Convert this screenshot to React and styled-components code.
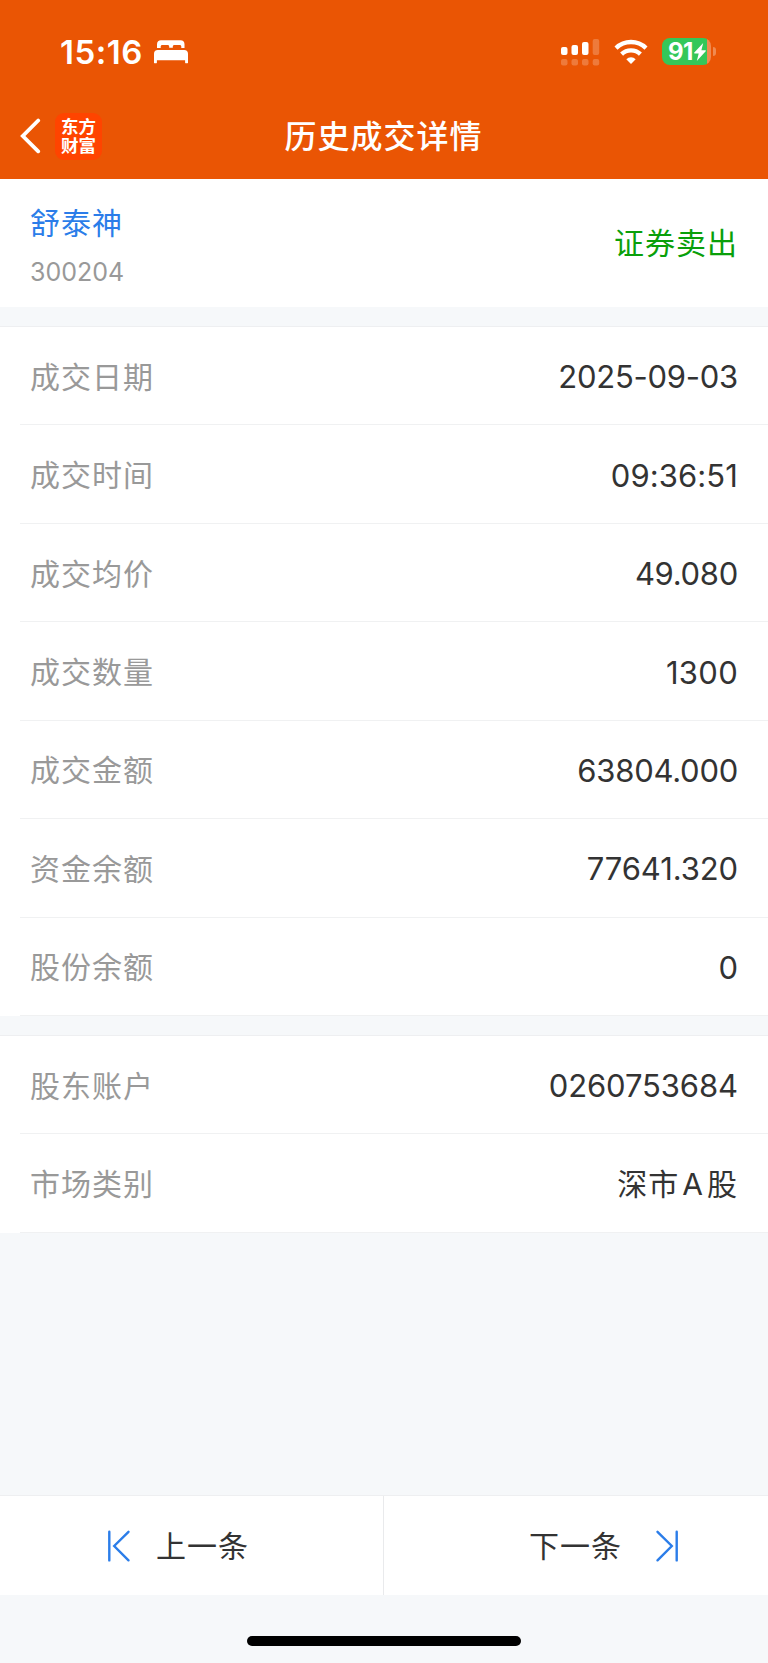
import React from 'react';
import styled, { createGlobalStyle } from 'styled-components';

const tradeRows = [
  { label: '成交日期', value: '2025-09-03', spacing: '-0.25px' },
  { label: '成交时间', value: '09:36:51', spacing: '0.1px' },
  { label: '成交均价', value: '49.080', spacing: '-0.3px' },
  { label: '成交数量', value: '1300', spacing: '0.3px' },
  { label: '成交金额', value: '63804.000', spacing: '-0.25px' },
  { label: '资金余额', value: '77641.320', spacing: '-0.1px' },
  { label: '股份余额', value: '0' },
];

const SignalIcon = () => (
  <svg width="39" height="28" viewBox="0 0 39 28" fill="#fff">
    <rect x="0" y="9" width="6.5" height="8" rx="2" />
    <rect x="10.5" y="7" width="6.5" height="10" rx="2" />
    <rect x="21" y="4" width="6.5" height="13" rx="2" />
    <g opacity="0.22">
      <rect x="31.7" y="1" width="6.5" height="16" rx="2" />
      <rect x="0" y="21" width="6.5" height="6.5" rx="2" />
      <rect x="10.5" y="21" width="6.5" height="6.5" rx="2" />
      <rect x="21" y="21" width="6.5" height="6.5" rx="2" />
      <rect x="31.7" y="21" width="6.5" height="6.5" rx="2" />
    </g>
  </svg>
);

const WifiIcon = () => (
  <svg width="34" height="26" viewBox="0 0 34 26" fill="none" stroke="#fff" strokeWidth="4.3">
    <path d="M2 9.1a21.5 21.5 0 0 1 30 0" />
    <path d="M7.6 15.1a13.5 13.5 0 0 1 18.8 0" />
    <path d="M12.3 20.2a6.8 6.8 0 0 1 9.4 0L17 25z" fill="#fff" stroke="none" />
  </svg>
);

const BedIcon = () => (
  <svg width="34" height="24" viewBox="0 0 34 24" fill="#fff">
    <path d="M3 8V4.2C3 1.7 4.6.2 7 .2h19.5c2.5 0 4 1.5 4 4V8h-3.2V6.8c0-1.2-.6-1.8-1.7-1.8h-5.1c-1.1 0-1.7.6-1.7 1.8v.9h-3.6v-.9c0-1.2-.6-1.8-1.7-1.8H8.4c-1.1 0-1.7.6-1.7 1.8V8z" />
    <path d="M0 13.8c0-2.4 1.3-3.8 3.8-3.8h26.4c2.5 0 3.8 1.4 3.8 3.8v8.6c0 1.2-2.9 1.2-2.9 0v-2.2H2.9v2.2c0 1.2-2.9 1.2-2.9 0z" />
  </svg>
);

const BoltIcon = () => (
  <svg width="12" height="18" viewBox="0 0 12 18" fill="#fff">
    <path d="M9.2 0 .3 9.6c-.4.5-.2 1 .4 1h4L2.8 18l8.9-9.7c.4-.5.2-1-.4-1H7.4z" />
  </svg>
);

const BackIcon = () => (
  <svg width="21" height="36" viewBox="0 0 21 36" fill="none" stroke="#fff" strokeWidth="3.8" strokeLinecap="round" strokeLinejoin="miter">
    <path d="M18.2 2.5 2.8 18l15.4 15.3" />
  </svg>
);

const StepIcon = ({ flip }) => (
  <svg width="24" height="32" viewBox="0 0 24 32" fill="none" stroke="#2b7de9" strokeWidth="2.4" strokeLinecap="round">
    <g transform={flip ? 'matrix(-1 0 0 1 24 0)' : undefined}>
      <path d="M2.3 1.8v28.6M21.5 1.8 7.2 16l14.3 14.3" />
    </g>
  </svg>
);

const DetailRow = ({ label, value, spacing, cjk }) => (
  <Row>
    <Label>{label}</Label>
    <Value $spacing={spacing} $cjk={cjk}>{value}</Value>
  </Row>
);

const App = () => {
  return (
    <Screen>
      <GlobalStyle />
      <Header>
        <StatusBar>
          <Clock>15:16</Clock>
          <BedIcon />
          <StatusIcons>
            <SignalIcon />
            <WifiIcon />
            <BatteryWrap>
              <Battery>
                91
                <BoltIcon />
              </Battery>
              <BatteryCap />
            </BatteryWrap>
          </StatusIcons>
        </StatusBar>
        <TitleBar>
          <HeaderLeft>
            <BackIcon />
            <Logo>
              <span>东方</span>
              <span>财富</span>
            </Logo>
          </HeaderLeft>
          <Title>历史成交详情</Title>
        </TitleBar>
      </Header>

      <StockCard>
        <div>
          <StockName>舒泰神</StockName>
          <StockCode>300204</StockCode>
        </div>
        <Direction>证券卖出</Direction>
      </StockCard>

      <Section>
        {tradeRows.map((row) => (
          <DetailRow key={row.label} {...row} />
        ))}
      </Section>

      <Section>
        <DetailRow label="股东账户" value="0260753684" spacing="-0.1px" />
        <DetailRow label="市场类别" value={<>深市<Letter>A</Letter>股</>} spacing="1px" cjk />
      </Section>

      <Pager>
        <PagerButton $gap="25px" $padding="0 27px 0 0">
          <StepIcon />
          <PagerText>上一条</PagerText>
        </PagerButton>
        <PagerButton $gap="33px" $padding="0 0 0 56px">
          <PagerText>下一条</PagerText>
          <StepIcon flip />
        </PagerButton>
      </Pager>
      <HomeArea>
        <HomeIndicator />
      </HomeArea>
    </Screen>
  );
};

const GlobalStyle = createGlobalStyle`
  * {
    box-sizing: border-box;
  }

  body {
    margin: 0;
    background: #f6f8fa;
  }

  svg {
    display: block;
    flex-shrink: 0;
  }
`;

const Screen = styled.div`
  display: flex;
  flex-direction: column;
  width: 768px;
  height: 1663px;
  background: #f6f8fa;
  font-family: Inter, 'Noto Sans CJK SC', sans-serif;
  color: #333;
`;

const Header = styled.header`
  height: 179.3px;
  flex-shrink: 0;
  background: #ea5504;
  color: #fff;
`;

const StatusBar = styled.div`
  display: flex;
  align-items: center;
  height: 96px;
  padding: 7px 52px 0 60px;
`;

const Clock = styled.div`
  width: 94px;
  font-size: 33px;
  font-weight: 600;
  letter-spacing: 0.5px;
  line-height: 40px;
`;

const StatusIcons = styled.div`
  display: flex;
  align-items: center;
  gap: 14px;
  margin-left: auto;
`;

const BatteryWrap = styled.div`
  display: flex;
  align-items: center;
  gap: 2px;
`;

const Battery = styled.div`
  display: flex;
  align-items: center;
  justify-content: center;
  gap: 1px;
  width: 49px;
  height: 27px;
  padding-right: 4px;
  padding-left: 5px;
  border-radius: 8px;
  background: linear-gradient(to right, #34c759 45px, #f08a50 45px);
  font-size: 24px;
  font-weight: 700;
  letter-spacing: -0.5px;
`;

const BatteryCap = styled.div`
  width: 3px;
  height: 9px;
  border-radius: 0 4px 4px 0;
  background: #f08a50;
`;

const TitleBar = styled.div`
  display: grid;
  grid-template-columns: 1fr auto 1fr;
  align-items: center;
  height: 80px;
`;

const HeaderLeft = styled.div`
  display: flex;
  align-items: center;
  gap: 14px;
  padding-left: 20px;
`;

const Logo = styled.div`
  display: flex;
  flex-direction: column;
  align-items: center;
  justify-content: center;
  width: 47px;
  height: 47px;
  border-radius: 9px;
  background: #ff4400;
  font-size: 17.5px;
  font-weight: 700;
  line-height: 19.5px;
`;

const Title = styled.h1`
  margin: 0;
  padding: 2px 1px 0 0;
  font-size: 32px;
  font-weight: 500;
  letter-spacing: 1px;
  line-height: 40px;
`;

const StockCard = styled.section`
  display: flex;
  align-items: center;
  justify-content: space-between;
  height: 127.7px;
  flex-shrink: 0;
  padding: 0 30px;
  background: #fff;
`;

const StockName = styled.div`
  padding-top: 5px;
  color: #2b7de9;
  font-size: 30px;
  letter-spacing: 1px;
  line-height: 44px;
`;

const StockCode = styled.div`
  margin-top: 9px;
  color: #999;
  font-size: 25px;
  line-height: 36px;
`;

const Direction = styled.div`
  padding-bottom: 4px;
  color: #0a9f0a;
  font-size: 30px;
  letter-spacing: 1px;
`;

const Section = styled.section`
  flex-shrink: 0;
  margin-top: 19px;
  border-top: 1px solid #eeeff1;
  background: #fff;
`;

const Row = styled.div`
  display: flex;
  align-items: center;
  justify-content: space-between;
  height: 98.45px;
  margin-left: 20px;
  padding: 0 30px 0 10px;
  border-bottom: 1px solid #f0f1f2;
`;

const Label = styled.span`
  padding-bottom: 2px;
  color: #999;
  font-size: 30px;
  letter-spacing: 1px;
`;

const Value = styled.span`
  padding-top: ${({ $cjk }) => ($cjk ? '0' : '2px')};
  padding-bottom: ${({ $cjk }) => ($cjk ? '2px' : '0')};
  font-size: ${({ $cjk }) => ($cjk ? '30px' : '31px')};
  letter-spacing: ${({ $spacing }) => $spacing || '0'};
`;

const Letter = styled.span`
  margin: 0 3px;
`;

const Pager = styled.nav`
  display: grid;
  grid-template-columns: 383px 1fr;
  height: 100px;
  flex-shrink: 0;
  margin-top: auto;
  border-top: 1px solid #eeeff1;
  background: #fff;
`;

const PagerButton = styled.button`
  display: flex;
  align-items: center;
  justify-content: center;
  gap: ${({ $gap }) => $gap};
  margin: 0;
  padding: ${({ $padding }) => $padding};
  border: 0;
  background: none;
  color: #333;
  font: inherit;
  font-size: 30px;
  letter-spacing: 1px;

  & + & {
    border-left: 1px solid #e9eaec;
  }
`;

const PagerText = styled.span`
  padding-bottom: 3px;
`;

const HomeArea = styled.footer`
  display: flex;
  justify-content: center;
  height: 68px;
  flex-shrink: 0;
  padding-top: 41px;
`;

const HomeIndicator = styled.div`
  width: 274px;
  height: 10px;
  border-radius: 5px;
  background: #000;
`;

export default App;
